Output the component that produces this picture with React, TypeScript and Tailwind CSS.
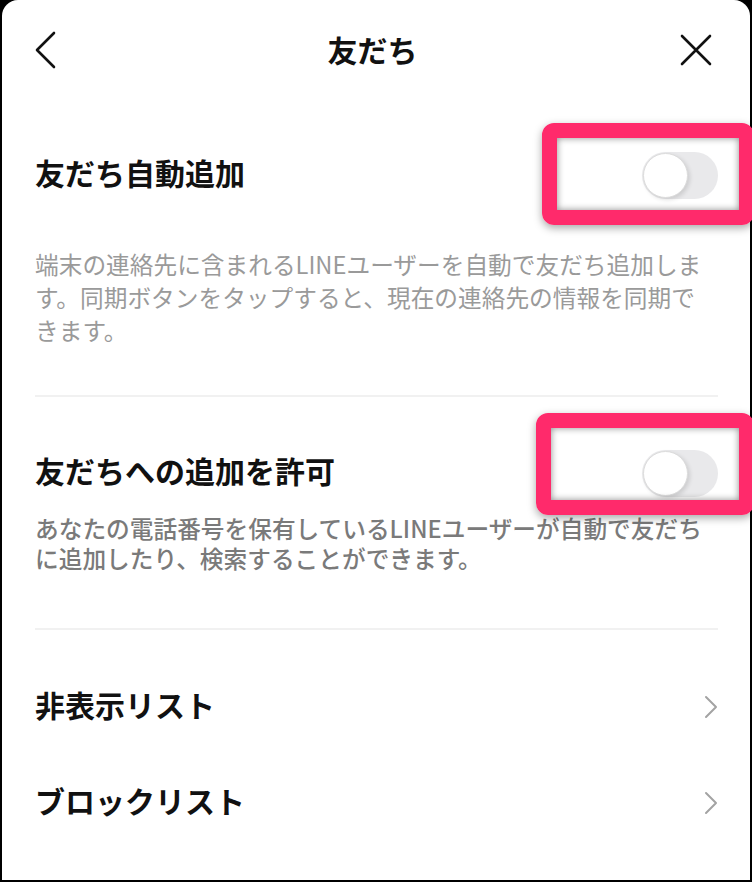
import React from 'react'

function Toggle() {
  return (
    <div className="relative h-[47px] w-[76px] rounded-full bg-[#e9e9eb]">
      <div className="absolute left-[1px] top-[1px] h-[45px] w-[45px] rounded-full border border-[#dcdcdc] bg-white shadow-[2px_2px_4px_rgba(0,0,0,0.12)]" />
    </div>
  )
}

function Highlight({ className }: { className: string }) {
  return (
    <div
      className={`absolute h-[102px] rounded-[12px] border-[15px] border-[#ff2a6b] shadow-[0_3px_8px_rgba(0,0,0,0.35)] ${className}`}
    >
      <div className="h-full w-full shadow-[inset_0_0_7px_rgba(0,0,0,0.45)]" />
    </div>
  )
}

function ChevronRight() {
  return (
    <svg width="14" height="24" viewBox="0 0 14 24" fill="none">
      <path d="M2 2l10 10L2 22" stroke="#a3a3a3" strokeWidth="2" strokeLinecap="round" strokeLinejoin="round" />
    </svg>
  )
}

export default function App() {
  return (
    <div className="relative h-[882px] w-[752px] overflow-hidden bg-black px-[2px] pb-[2px] font-['Noto_Sans_CJK_JP',sans-serif]">
      <div className="h-full rounded-t-[16px] bg-white">
        {/* header */}
        <div className="grid h-[100px] grid-cols-[1fr_auto_1fr] items-center pl-[31px] pr-[38px]">
          <svg width="26" height="40" viewBox="0 0 26 40" fill="none">
            <path d="M21 3L4 20l17 17" stroke="#111" strokeWidth="2.6" strokeLinecap="round" strokeLinejoin="round" />
          </svg>
          <h1 className="pb-[3px] text-[30px] font-bold leading-none text-[#111]">友だち</h1>
          <div className="flex justify-end">
            <svg width="32" height="32" viewBox="0 0 32 32" fill="none">
              <path d="M2 2l28 28M30 2L2 30" stroke="#111" strokeWidth="2.6" strokeLinecap="round" />
            </svg>
          </div>
        </div>

        <div className="pl-[33px] pr-[32px]">
          <div className="mt-[25px] flex h-[100px] items-center justify-between">
            <span className="pb-[5px] text-[30px] font-bold text-[#111]">友だち自動追加</span>
            <Toggle />
          </div>
          <p className="mt-[23px] pr-[4px] text-[23.7px] leading-[33px] text-[#9a9a9a]">
            端末の連絡先に含まれるLINEユーザーを自動で友だち追加します。同期ボタンをタップすると、現在の連絡先の情報を同期できます。
          </p>
          <div className="mt-[48px] h-[2px] bg-[#f1f1f1]" />

          <div className="mt-[36px] flex h-[80px] items-center justify-between">
            <span className="pb-[5px] text-[30px] font-bold text-[#111]">友だちへの追加を許可</span>
            <Toggle />
          </div>
          <p className="pr-[4px] text-[23.7px] font-medium leading-[30px] text-[#7a7a7a]">
            あなたの電話番号を保有しているLINEユーザーが自動で友だちに追加したり、検索することができます。
          </p>
          <div className="mt-[55px] h-[2px] bg-[#f1f1f1]" />

          <div className="mt-[29px]">
            {['非表示リスト', 'ブロックリスト'].map((label) => (
              <div key={label} className="flex h-[96px] items-center justify-between">
                <span className="pb-[5px] text-[30px] font-bold text-[#111]">{label}</span>
                <ChevronRight />
              </div>
            ))}
          </div>
        </div>
      </div>

      <Highlight className="left-[542px] top-[123px] w-[212px]" />
      <Highlight className="left-[536px] top-[413px] w-[218px]" />
    </div>
  )
}
